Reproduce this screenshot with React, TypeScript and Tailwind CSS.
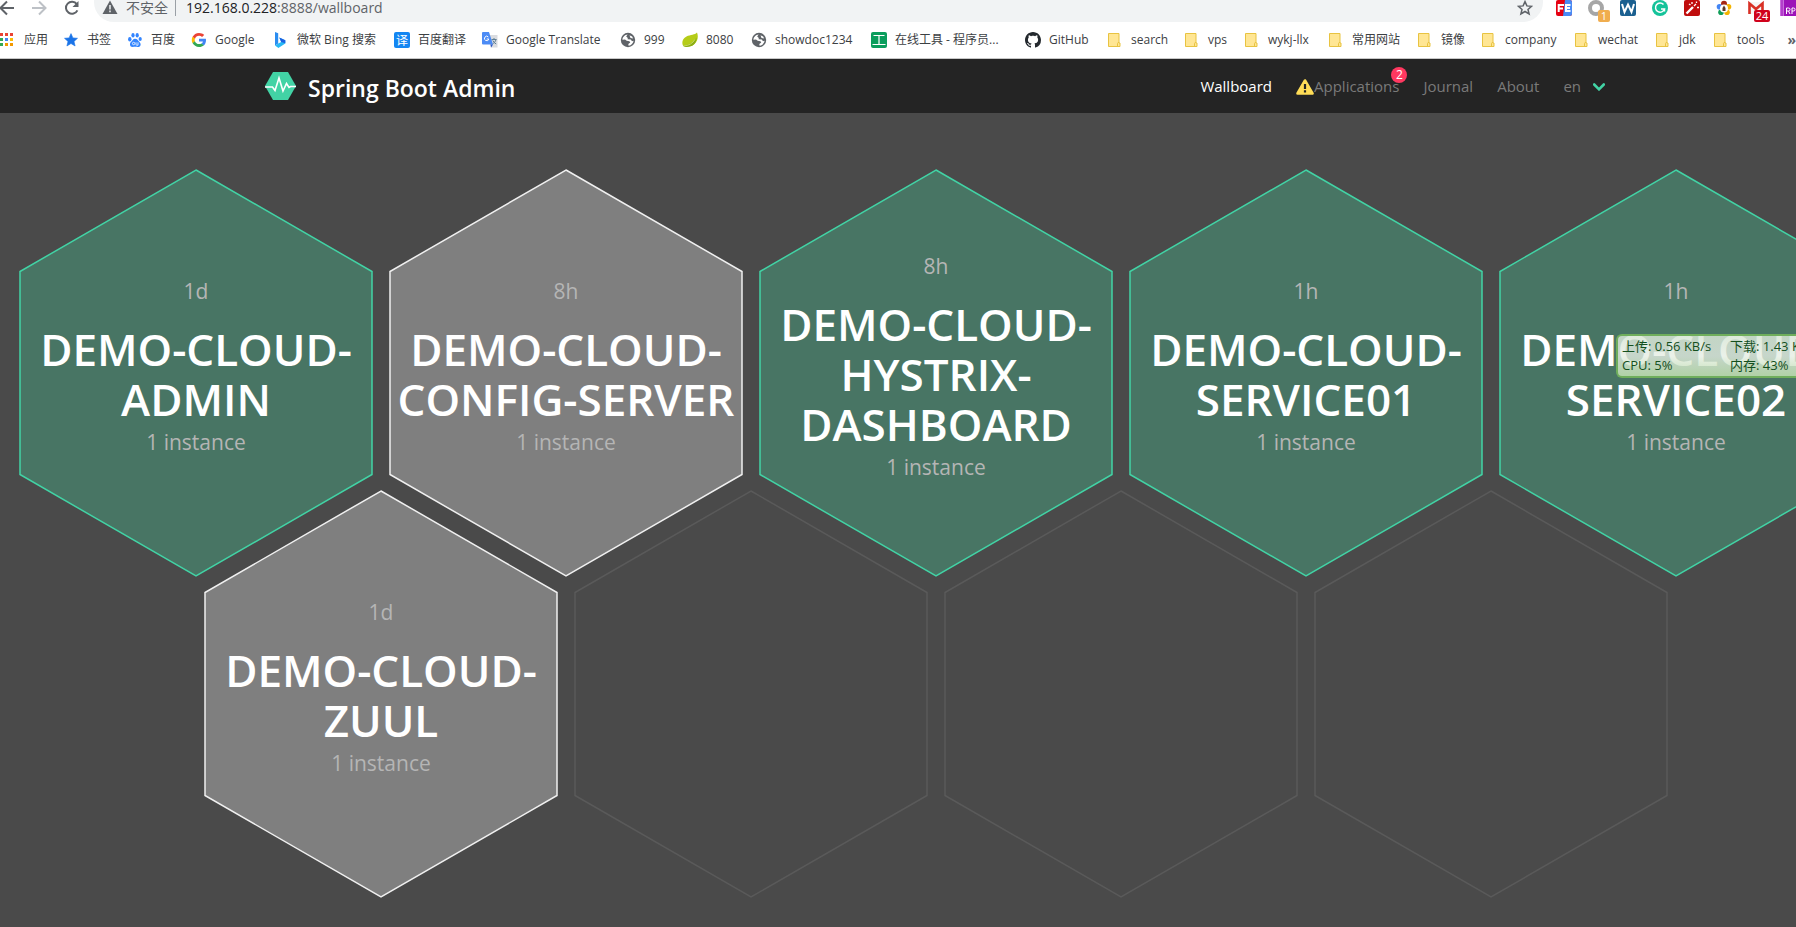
import React, { ReactNode } from "react";

const PUNCH = "h-4 w-4 shrink-0";

function Apps() {
  const c = ["#ea4335", "#ea4335", "#ea4335", "#34a853", "#4285f4", "#fbbc04", "#34a853", "#f29900", "#f29900"];
  return (
    <svg className={PUNCH} viewBox="0 0 16 16">
      {c.map((f, i) => (
        <rect key={i} x={(i % 3) * 5} y={1 + Math.floor(i / 3) * 5} width="3" height="3" fill={f} />
      ))}
    </svg>
  );
}
function Star({ outline }: { outline?: boolean }) {
  return (
    <svg className={PUNCH} viewBox="0 0 16 16">
      <path
        d="M8 1.6l1.9 4.3 4.6.4-3.5 3.1 1.1 4.6L8 11.5 3.9 14l1.1-4.6L1.5 6.3l4.6-.4z"
        fill={outline ? "none" : "#1a73e8"}
        stroke={outline ? "#5f6368" : "#1a73e8"}
        strokeWidth={outline ? 1.5 : 0.6}
      />
    </svg>
  );
}
function Paw() {
  return (
    <svg className={PUNCH} viewBox="0 0 16 16" fill="#3385ff">
      <ellipse cx="2.8" cy="7.2" rx="1.7" ry="2.2" />
      <ellipse cx="6" cy="3.2" rx="1.6" ry="2.3" />
      <ellipse cx="10.2" cy="3.3" rx="1.6" ry="2.2" />
      <ellipse cx="13.2" cy="7" rx="1.6" ry="2.1" />
      <path d="M8 6.8c-2 0-2.6 2-4 3.2-1.600 1.400-1.400 5 1.500 5 1.500 0 3.400-.3 5 0 3.200.4 4-3 2.200-4.800C11 8.600 10.200 6.800 8 6.800z" />
      <circle cx="6.600" cy="11.500" r="1.200" fill="none" stroke="#fff" strokeWidth=".8" />
      <path d="M9 10.300v2.200q0 .7.8.7h1.200v-2.900" fill="none" stroke="#fff" strokeWidth=".8" />
    </svg>
  );
}
function GoogleG() {
  return (
    <svg className={PUNCH} viewBox="0 0 48 48">
      <path fill="#EA4335" d="M24 11.500c3.500 0 6.700 1.200 9.200 3.600l6.300-6.300C35.600 5.200 30.300 3 24 3 15.500 3 8.100 7.900 4.600 15l7.300 5.700c1.800-5.300 6.600-9.200 12.100-9.200z" />
      <path fill="#4285F4" d="M45 24.500c0-1.500-.2-3-.4-4.400H24v8.400h11.800c-.5 2.700-2.100 5-4.400 6.600l7.100 5.500C42.600 36.800 45 31.200 45 24.500z" />
      <path fill="#FBBC05" d="M11.900 28.300c-.5-1.400-.7-2.800-.7-4.300s.3-3 .7-4.300l-7.300-5.700C3.100 17 2.300 20.400 2.300 24s.8 7 2.300 10z" />
      <path fill="#34A853" d="M24 45c5.900 0 10.900-1.900 14.500-5.300l-7.100-5.500c-2 1.300-4.500 2.100-7.400 2.100-5.600 0-10.300-3.700-12.100-8.800L4.600 33.200C8.100 40.300 15.500 45 24 45z" />
    </svg>
  );
}
function Bing() {
  return (
    <svg className={PUNCH} viewBox="0 0 16 16">
      <path d="M2 0l3.200 1.200v10.300L2 13.600z" fill="#2a8cf0" />
      <path d="M2 13.600l3.200-2.100 3-1.600-1.900-4.400 6 2.700v3.200L5.400 16z" fill="#28b8f5" />
      <path d="M6.300 5.500l6 2.700v3l-4.100-1.300z" fill="#1b5fe0" />
    </svg>
  );
}
function Badge({ color, children }: { color: string; children: ReactNode }) {
  return (
    <svg className={PUNCH} viewBox="0 0 16 16">
      <rect width="16" height="16" rx="2" fill={color} />
      {children}
    </svg>
  );
}
function Yi() {
  return (
    <Badge color="#1386f2">
      <text x="8" y="12.500" fontSize="12" textAnchor="middle" fill="#fff" fontFamily="Noto Sans CJK SC, sans-serif">
        译
      </text>
    </Badge>
  );
}
function GTranslate() {
  return (
    <svg className={PUNCH} viewBox="0 0 16 16">
      <path d="M6 3h9.500v12.500H8.500z" fill="#dadce0" />
      <path d="M9.500 7.500h5M12 6v1.500M14 7.500c-.5 2-1.800 3.500-3.500 4.500M10.800 8.500c.7 1.500 1.800 2.600 3.400 3.500" stroke="#5f7f95" fill="none" />
      <path d="M0 1q0-1 1-1h6l4 12.500H1q-1 0-1-1z" fill="#4c8bf5" />
      <path d="M8.500 12.500h2.500l-1.800 3z" fill="#2a56c6" />
      <path d="M6.300 5A2.200 2.200 0 1 0 6.800 7H4.700" stroke="#fff" fill="none" />
    </svg>
  );
}
function Globe() {
  return (
    <svg className={PUNCH} viewBox="0 0 16 16">
      <circle cx="8" cy="8" r="7.200" fill="#5f6368" />
      <path d="M7.600 2.400L6.200 4.600l1.600 1.300-.2 1.400 3.200.3 1.200 1.700 1.600-.5c-.4 2.600-2.300 4.600-5 4.900L8.300 12l2-1.500-.9-1.300-2.700-.4L5 7.600l-2.600.1C2.600 4.900 4.800 2.600 7.600 2.400z" fill="#fff" />
      <path d="M9.500 3.200l2.600 1.200 1 2.100-2.600-.6z" fill="#fff" />
    </svg>
  );
}
function Leaf() {
  return (
    <svg className={PUNCH} viewBox="0 0 16 16">
      <path d="M15 .5C13 3 8.500 2.500 4.500 4.500S-.5 10.500 1 13.500c3 1.500 8 1.500 11.500-1.500S16.500 4 15 .5z" fill="#b5cc18" />
      <path d="M1 13.500c5 0 10-2.500 13.500-8C14.800 11 11 15 4.500 15 3 15 1.500 14.500 1 13.500z" fill="#8bad13" />
      <path d="M2 14c5-.5 8.500-2.500 11-6.500" stroke="#e8f0a0" fill="none" strokeWidth=".6" />
    </svg>
  );
}
function Gong() {
  return (
    <Badge color="#0a9d5c">
      <path d="M2.500 3.500h11M8 3.500v9M1.500 12.500h13" stroke="#fff" strokeWidth="1.200" />
    </Badge>
  );
}
function GitHub() {
  return (
    <svg className={PUNCH} viewBox="0 0 16 16" fill="#24292e">
      <path d="M8 0C3.580 0 0 3.580 0 8c0 3.540 2.290 6.530 5.470 7.590.4.070.55-.17.55-.38 0-.19-.01-.82-.01-1.490-2.010.37-2.530-.49-2.690-.94-.09-.23-.48-.94-.82-1.130-.28-.15-.68-.52-.01-.53.63-.01 1.080.58 1.230.82.72 1.210 1.870.87 2.330.66.07-.52.28-.87.51-1.070-1.780-.2-3.640-.89-3.640-3.950 0-.87.31-1.590.82-2.150-.08-.2-.36-1.020.08-2.120 0 0 .67-.21 2.200.82.64-.18 1.320-.27 2-.27s1.360.09 2 .27c1.530-1.040 2.200-.82 2.200-.82.44 1.100.16 1.920.08 2.120.51.56.82 1.270.82 2.150 0 3.070-1.870 3.750-3.650 3.950.29.25.54.73.54 1.480 0 1.070-.01 1.930-.01 2.200 0 .21.15.46.55.38A8.010 8.010 0 0 0 16 8c0-4.420-3.580-8-8-8z" />
    </svg>
  );
}
function Folder() {
  return (
    <svg className={PUNCH} viewBox="0 0 16 16">
      <path d="M1.500 1.500h10.500v9.500h1v3.500h-11.500z" fill="#ffe694" stroke="#e8c341" />
      <path d="M10.500 14.500v-3q0-1 1.500-1" fill="none" stroke="#e8c341" />
    </svg>
  );
}

const bookmarks: { label: string; icon: ReactNode; width: string }[] = [
  { label: "应用", icon: <Apps />, width: "w-[63px]" },
  { label: "书签", icon: <Star />, width: "w-[64px]" },
  { label: "百度", icon: <Paw />, width: "w-[64px]" },
  { label: "Google", icon: <GoogleG />, width: "w-[82px]" },
  { label: "微软 Bing 搜索", icon: <Bing />, width: "w-[121px]" },
  { label: "百度翻译", icon: <Yi />, width: "w-[88px]" },
  { label: "Google Translate", icon: <GTranslate />, width: "w-[138px]" },
  { label: "999", icon: <Globe />, width: "w-[62px]" },
  { label: "8080", icon: <Leaf />, width: "w-[69px]" },
  { label: "showdoc1234", icon: <Globe />, width: "w-[120px]" },
  { label: "在线工具 - 程序员...", icon: <Gong />, width: "w-[154px]" },
  { label: "GitHub", icon: <GitHub />, width: "w-[82px]" },
  { label: "search", icon: <Folder />, width: "w-[77px]" },
  { label: "vps", icon: <Folder />, width: "w-[60px]" },
  { label: "wykj-llx", icon: <Folder />, width: "w-[84px]" },
  { label: "常用网站", icon: <Folder />, width: "w-[89px]" },
  { label: "镜像", icon: <Folder />, width: "w-[64px]" },
  { label: "company", icon: <Folder />, width: "w-[93px]" },
  { label: "wechat", icon: <Folder />, width: "w-[81px]" },
  { label: "jdk", icon: <Folder />, width: "w-[58px]" },
  { label: "tools", icon: <Folder />, width: "w-[68px]" },
];

function Extensions() {
  return (
    <div className="flex shrink-0 items-center gap-4">
      <button aria-label="FE">
        <svg className={PUNCH} viewBox="0 0 16 16">
          <rect width="16" height="16" rx="2" fill="#e60012" />
          <path d="M9 0h5q2 0 2 2v12q0 2-2 2H7z" fill="#4a8af4" />
          <path d="M2.700 12V5h5.300M2.700 8.500h4.300M14.500 5H10v6h4.500M10 8.100h4" stroke="#fff" strokeWidth="2" fill="none" />
        </svg>
      </button>
      <button aria-label="Proxy" className="relative">
        <svg className={PUNCH} viewBox="0 0 16 16">
          <circle cx="8" cy="8" r="6" fill="none" stroke="#a6a6a6" strokeWidth="4" />
        </svg>
        <span className="absolute top-[10px] left-[10px] h-3 w-3 rounded-xs bg-[#f0ad4e] text-center text-[11px] leading-3 text-white">1</span>
      </button>
      <button aria-label="W">
        <Badge color="#1b6090">
          <path d="M2 4l2.500 8L8 4.500 11.500 12 14 4" stroke="#fff" strokeWidth="2" fill="none" />
        </Badge>
      </button>
      <button aria-label="Grammar">
        <svg className={PUNCH} viewBox="0 0 16 16">
          <circle cx="8" cy="8" r="8" fill="#15c39a" />
          <path d="M11.500 4.500A4.600 4.600 0 1 0 12.500 9H9M12.500 8.500v3" stroke="#fff" strokeWidth="1.500" fill="none" />
        </svg>
      </button>
      <button aria-label="Wand">
        <Badge color="#c00d0d">
          <path d="M2.500 13.500L9 7" stroke="#fff" strokeWidth="2.400" />
          <path d="M10 6l2-2M8 2v2M13 7.500h2M12.500 1.500v1.500M5 4l1.500 1" stroke="#fff" strokeWidth="1.300" />
        </Badge>
      </button>
      <button aria-label="Color">
        <svg className={PUNCH} viewBox="0 0 16 16">
          <circle cx="8" cy="3.800" r="3" fill="#a52714" />
          <circle cx="12.500" cy="6.800" r="2.800" fill="#f4b400" />
          <circle cx="11" cy="12.200" r="2.800" fill="#f4b400" />
          <circle cx="5" cy="12.200" r="2.800" fill="#0f9d58" />
          <circle cx="3.500" cy="6.800" r="2.800" fill="#4285f4" />
          <circle cx="8" cy="8.600" r="4" fill="#fff" />
          <path d="M8 5.500l1.500 2.500v3h-3V8z" fill="#5b3a29" />
        </svg>
      </button>
      <button aria-label="Mail" className="relative">
        <svg className={PUNCH} viewBox="0 0 16 16">
          <rect y="2" width="16" height="12" fill="#f5f5f5" />
          <path d="M1.500 14V3.500L8 9l6.500-5.500V14" stroke="#d93025" strokeWidth="2.600" fill="none" />
        </svg>
        <span className="absolute top-[10px] left-[6px] h-3 w-4 rounded-xs bg-[#d0021b] text-center text-[11px] leading-3 text-white">24</span>
      </button>
      <button aria-label="RP">
        <svg className={PUNCH} viewBox="0 0 16 16">
          <rect width="16" height="16" fill="#9c13b8" />
          <path d="M0 0h1.500v16H0zM2.500 0H4v16H2.500z" fill="#c86bdc" />
          <path d="M6.500 14V8h2q1.500 0 1.500 1.500T8.500 11h-2M8.500 11l1.500 3M12 14V8h1.500q1.500 0 1.500 1.500T13.500 11H12" stroke="#fff" fill="none" />
        </svg>
      </button>
    </div>
  );
}

function BrowserBar() {
  return (
    <div className="bg-white text-[#3c4043]">
      <div className="flex h-[22px] items-start">
        <div className="flex shrink-0 gap-4 pr-[14px]">
          <button aria-label="Back">
            <svg className={PUNCH} viewBox="0 0 16 16" fill="none" stroke="#5f6368" strokeWidth="2">
              <path d="M14 8H1M7 1.500L.5 8 7 14.500" />
            </svg>
          </button>
          <button aria-label="Forward">
            <svg className={PUNCH} viewBox="0 0 16 16" fill="none" stroke="#bdc1c6" strokeWidth="2">
              <path d="M0 8h13M7 1.500L13.500 8 7 14.500" />
            </svg>
          </button>
          <button aria-label="Reload">
            <svg className={PUNCH} viewBox="0 0 16 16" fill="none" stroke="#5f6368" strokeWidth="2">
              <path d="M13.400 10.300A6 6 0 1 1 12.800 4.200" />
              <path d="M14.500 1v6H8.500z" fill="#5f6368" stroke="none" />
            </svg>
          </button>
        </div>
        <div className="flex h-[22px] flex-1 items-start rounded-b-[20px] bg-[#f1f3f4] pr-[10px] pl-2 leading-4">
          <svg className="h-4 w-4 shrink-0" viewBox="0 0 16 16">
            <path d="M8 .500L15.500 14H.500z" fill="#5f6368" />
            <path d="M8 5v4.500M8 10.500v1.800" stroke="#f1f3f4" strokeWidth="1.500" />
          </svg>
          <span className="ml-2 text-sm leading-4 text-[#5f6368]">不安全</span>
          <span className="mx-[7px] h-4 w-px bg-[#9aa0a6]" />
          <span className="ml-[3px] flex-1 text-sm leading-4 text-[#5f6368]">
            <span className="text-[#202124]">192.168.0.228</span>:8888/wallboard
          </span>
          <button aria-label="Bookmark this page">
            <Star outline />
          </button>
        </div>
        <div className="pl-[13px]">
          <Extensions />
        </div>
      </div>
      <nav className="flex h-[37px] items-center overflow-hidden border-b border-[#c8c8c8] text-xs">
        {bookmarks.map((b) => (
          <a key={b.label} href="#" className={`flex shrink-0 items-center gap-2 whitespace-nowrap ${b.width}`}>
            {b.icon}
            {b.label}
          </a>
        ))}
        <button className="ml-auto text-sm font-bold text-[#5f6368]">»</button>
      </nav>
    </div>
  );
}

function AppHeader() {
  return (
    <header className="flex h-[54px] items-center bg-[#242424] pr-[191px] pl-[265px]">
      <a href="#" className="flex items-center gap-3 text-[23px] font-semibold text-white">
        <svg className="h-7 w-[31px]" viewBox="0 0 31 28">
          <path d="M8 0h15l8 14-8 14H8L0 14z" fill="#42d3a5" />
          <path d="M0 15h7.500l2.500 3.500L14 6l4 13 3.500-7.500 2.500 4 1.500-1H31" fill="none" stroke="#fff" strokeWidth="1.600" />
        </svg>
        <span className="pt-1">Spring Boot Admin</span>
      </a>
      <nav className="ml-auto flex items-center gap-6 pt-px text-[15px] text-[#7a7a7a]">
        <a href="#" className="text-white">Wallboard</a>
        <a href="#" className="relative flex items-center">
          <svg className="h-4 w-[18px]" viewBox="0 0 18 16">
            <path d="M9 1.500L16.500 14.500h-15z" fill="#ffdd57" stroke="#ffdd57" strokeWidth="2.600" strokeLinejoin="round" />
            <path d="M9 5v5M9 11.300v2.200" stroke="#242424" strokeWidth="2.200" />
          </svg>
          Applications
          <span className="absolute -top-2 -right-2 h-4 w-4 rounded-full bg-[#ff3860] text-center text-xs leading-4 text-white">2</span>
        </a>
        <a href="#">Journal</a>
        <a href="#">About</a>
        <button className="flex items-center gap-3">
          en
          <svg className="h-2 w-3" viewBox="0 0 12 8">
            <path d="M1.200 1.500L6 6.300l4.800-4.800" fill="none" stroke="#42d3a5" strokeWidth="2.600" strokeLinecap="round" />
          </svg>
        </button>
      </nav>
    </header>
  );
}

type Status = "up" | "unknown" | "empty";
type Cell = { status: Status; age?: string; lines?: string[] };

const hexStyle: Record<Status, string> = {
  up: "fill-[#487564] stroke-[#42d3a5]",
  unknown: "fill-[#7f7f7f] stroke-[#f0f0f0]",
  empty: "fill-none stroke-[#5a5a5a]",
};

const rows: Cell[][] = [
  [
    { status: "up", age: "1d", lines: ["DEMO-CLOUD-", "ADMIN"] },
    { status: "unknown", age: "8h", lines: ["DEMO-CLOUD-", "CONFIG-SERVER"] },
    { status: "up", age: "8h", lines: ["DEMO-CLOUD-", "HYSTRIX-", "DASHBOARD"] },
    { status: "up", age: "1h", lines: ["DEMO-CLOUD-", "SERVICE01"] },
    { status: "up", age: "1h", lines: ["DEMO-CLOUD-", "SERVICE02"] },
  ],
  [
    { status: "unknown", age: "1d", lines: ["DEMO-CLOUD-", "ZUUL"] },
    { status: "empty" },
    { status: "empty" },
    { status: "empty" },
  ],
];

function Hexagon({ cell }: { cell: Cell }) {
  return (
    <div className="grid w-[370px] shrink-0">
      <svg className="col-start-1 row-start-1 h-[408px] w-[370px]" viewBox="0 0 370 408">
        <path d="M185 1L361 102.500V305.500L185 407L9 305.500V102.500z" strokeWidth="1.500" className={hexStyle[cell.status]} />
      </svg>
      {cell.lines && (
        <a href="#" className="col-start-1 row-start-1 flex flex-col items-center justify-center pb-[14px] text-center text-[21px] leading-9 text-[#b5b5b5]">
          <span>{cell.age}</span>
          <h2 className="mt-[15px] text-[44px] leading-[50px] font-semibold text-white">
            {cell.lines.map((l) => (
              <span key={l} className="block">{l}</span>
            ))}
          </h2>
          <span>1 instance</span>
        </a>
      )}
    </div>
  );
}

function Monitor() {
  return (
    <aside className="absolute top-[334px] right-0 grid w-[180px] grid-cols-[108px_1fr] overflow-hidden rounded-l-md border-2 border-r-0 border-[#6fae5c] bg-linear-to-b from-[#d8e6d6]/85 via-[#e6eee4]/80 to-[#bcdcae]/90 py-[1px] pl-1 text-[13px] leading-[19px] whitespace-nowrap text-[#14501e]">
      <span>上传: 0.56 KB/s</span>
      <span>下载: 1.43 KB/s</span>
      <span>CPU: 5%</span>
      <span>内存: 43%</span>
    </aside>
  );
}

export default function App() {
  return (
    <div className="relative min-h-screen overflow-hidden bg-[#4a4a4a] font-['Open_Sans','Noto_Sans_CJK_SC',sans-serif]">
      <BrowserBar />
      <AppHeader />
      <main className="pt-14 pb-7 pl-[11px]">
        <div className="flex">
          {rows[0].map((c, i) => (
            <Hexagon key={i} cell={c} />
          ))}
        </div>
        <div className="-mt-[87px] flex pl-[185px]">
          {rows[1].map((c, i) => (
            <Hexagon key={i} cell={c} />
          ))}
        </div>
      </main>
      <Monitor />
    </div>
  );
}
